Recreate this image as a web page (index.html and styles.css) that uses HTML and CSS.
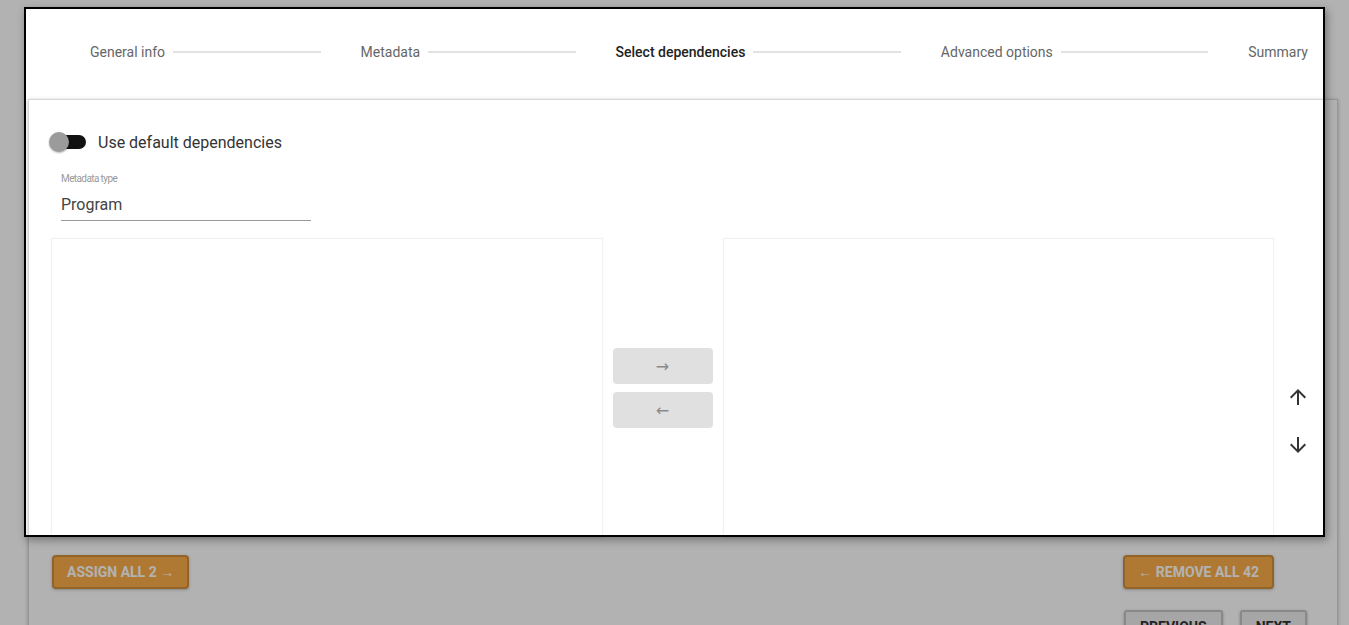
FILE: index.html
```html
<!DOCTYPE html>
<html lang="en">
<head>
<meta charset="utf-8">
<title>Select dependencies</title>
<link rel="stylesheet" href="styles.css">
</head>
<body>
<div class="page">
  <nav class="stepper">
    <div class="step"><span class="step-label">General info</span><span class="step-line"></span></div>
    <div class="step"><span class="step-label">Metadata</span><span class="step-line"></span></div>
    <div class="step"><span class="step-label active">Select dependencies</span><span class="step-line"></span></div>
    <div class="step"><span class="step-label">Advanced options</span><span class="step-line"></span></div>
    <div class="step last"><span class="step-label">Summary</span></div>
  </nav>

  <section class="card">
    <div class="toggle-row">
      <span class="toggle"><span class="toggle-thumb"></span></span>
      <span class="toggle-text">Use default dependencies</span>
    </div>

    <div class="field">
      <div class="field-label">Metadata type</div>
      <div class="field-value">Program</div>
    </div>

    <div class="transfer">
      <div class="list"></div>
      <div class="mid">
        <button class="move-btn">&rarr;</button>
        <button class="move-btn">&larr;</button>
      </div>
      <div class="list"></div>
      <div class="order">
        <button class="order-btn" aria-label="Move up">
          <svg width="24" height="24" viewBox="0 0 24 24"><path d="M4 12l1.41 1.41L11 7.83V20h2V7.83l5.58 5.59L20 12l-8-8-8 8z" fill="#333"/></svg>
        </button>
        <button class="order-btn" aria-label="Move down">
          <svg width="24" height="24" viewBox="0 0 24 24"><path d="M20 12l-1.41-1.41L13 16.17V4h-2v12.17l-5.58-5.59L4 12l8 8 8-8z" fill="#333"/></svg>
        </button>
      </div>
    </div>

    <div class="bulk">
      <button class="btn-orange">Assign all 2 &rarr;</button>
      <button class="btn-orange">&larr; Remove all 42</button>
    </div>

    <div class="nav">
      <button class="btn-gray">Previous</button>
      <button class="btn-gray">Next</button>
    </div>
  </section>
</div>
<div class="spotlight"></div>
</body>
</html>
```

FILE: styles.css
```css
html, body {
  margin: 0;
  padding: 0;
  overflow: hidden;
  background: #fff;
  font-family: Roboto, "Liberation Sans", sans-serif;
}

.page {
  padding: 0 11px 0 28px;
}

/* Stepper */
.stepper {
  display: flex;
  align-items: center;
  height: 99px;
  padding: 5px 30px 0 62px;
  box-sizing: border-box;
}

.step {
  display: flex;
  align-items: center;
  flex: 1 1 auto;
}

.step.last {
  flex: none;
}

.step-label {
  font-size: 14px;
  color: #666;
  white-space: nowrap;
}

.step-label.active {
  color: #222;
  font-weight: 500;
}

.step-line {
  flex: 1;
  height: 2px;
  background: #e2e2e2;
  margin: 0 40px 0 8px;
}

/* Card */
.card {
  border: 1px solid #d6d6d6;
  box-shadow: 0 1px 4px rgba(0, 0, 0, 0.25);
  padding: 30px 15px 40px 22px;
  background: #fff;
}

.toggle-row {
  display: flex;
  align-items: center;
  height: 24px;
}

.toggle {
  position: relative;
  width: 34px;
  height: 14px;
  border-radius: 7px;
  background: #111;
  margin-left: 1px;
}

.toggle-thumb {
  position: absolute;
  left: -3px;
  top: -3px;
  width: 20px;
  height: 20px;
  border-radius: 50%;
  background: #9b9b9b;
  box-shadow: 0 1px 2px rgba(0, 0, 0, 0.3);
}

.toggle-text {
  margin-left: 12px;
  font-size: 16px;
  color: #333;
}

.field {
  width: 250px;
  margin: 19px 0 0 10px;
}

.field-label {
  font-size: 10px;
  line-height: 12px;
  letter-spacing: -0.6px;
  color: #9a9a9a;
}

.field-value {
  font-size: 16px;
  line-height: 20px;
  color: #444;
  padding: 10px 0 5px;
  border-bottom: 1px solid #999;
}

/* Transfer lists */
.transfer {
  display: flex;
  margin-top: 17px;
  height: 300px;
}

.list {
  flex: 1;
  border: 1px solid #f2f2f2;
  box-shadow: 0 0 2px rgba(0, 0, 0, 0.04);
}

.mid {
  width: 120px;
  display: flex;
  flex-direction: column;
  justify-content: center;
  align-items: center;
  gap: 8px;
}

.move-btn {
  width: 100px;
  height: 36px;
  border: none;
  border-radius: 4px;
  background: #e0e0e0;
  color: #8a8a8a;
  font-family: "DejaVu Sans", sans-serif;
  font-size: 16px;
  padding: 0;
}

.order {
  width: 48px;
  display: flex;
  flex-direction: column;
  align-items: center;
  padding-top: 135px;
  box-sizing: border-box;
}

.order-btn {
  width: 48px;
  height: 48px;
  border: none;
  background: none;
  padding: 0;
  display: flex;
  align-items: center;
  justify-content: center;
}

/* Bottom buttons */
.bulk {
  display: flex;
  justify-content: space-between;
  margin: 17px 48px 0 1px;
}

.btn-orange {
  height: 34px;
  padding: 0 13px;
  border: 2px solid #d3903a;
  border-radius: 4px;
  background: #fbae4a;
  color: #fff;
  font-family: Roboto, "Liberation Sans", sans-serif;
  font-size: 14px;
  font-weight: 700;
  text-transform: uppercase;
  box-shadow: 0 1px 3px rgba(0, 0, 0, 0.25);
}

.nav {
  display: flex;
  justify-content: flex-end;
  gap: 17px;
  margin: 21px 15px 0 0;
}

.btn-gray {
  height: 34px;
  padding: 0 14px;
  border: 2px solid #c4c4c4;
  border-radius: 3px;
  background: #eee;
  color: #333;
  font-family: Roboto, "Liberation Sans", sans-serif;
  font-size: 14px;
  font-weight: 700;
  text-transform: uppercase;
  box-shadow: 0 1px 3px rgba(0, 0, 0, 0.3);
}

/* Tour spotlight overlay */
.spotlight {
  position: absolute;
  left: 24px;
  top: 7px;
  width: 1301px;
  height: 530px;
  box-sizing: border-box;
  border: 2px solid #000;
  pointer-events: none;
  box-shadow: 2px 3px 8px rgba(0, 0, 0, 0.35), 0 0 0 3000px rgba(0, 0, 0, 0.3);
}
```
